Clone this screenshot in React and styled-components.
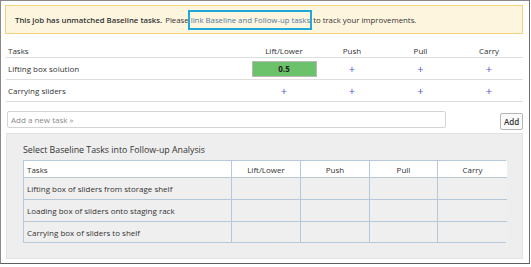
import React from 'react'
import styled, { createGlobalStyle } from 'styled-components'

const GlobalStyle = createGlobalStyle`
  body {
    margin: 0;
    background: #ffffff;
    font-family: "Open Sans", "Liberation Sans", sans-serif;
    color: #333333;
  }
`

const Frame = styled.div`
  box-sizing: border-box;
  width: 530px;
  height: 264px;
  border: 1px solid #8a8a8a;
  border-right-color: #6f6f6f;
  border-bottom-color: #5f5f5f;
  padding: 4px 6px 0 4px;
  display: flex;
  flex-direction: column;
`

const Banner = styled.div`
  box-sizing: border-box;
  height: 29px;
  flex-shrink: 0;
  background: #fdf5de;
  border: 1px solid #f3d27a;
  display: flex;
  align-items: center;
  padding-left: 9px;
  font-size: 7.8px;
  color: #333;
  white-space: nowrap;
`

const Strong = styled.b`
  font-weight: 600;
  margin-right: 3px;
`

const Link = styled.a`
  position: relative;
  color: #4d7aa3;
  text-decoration: none;
  margin-right: 3px;
`

const Highlight = styled.span`
  position: absolute;
  left: -3px;
  right: -2px;
  top: -5px;
  bottom: -5px;
  box-sizing: border-box;
  border: 2px solid #1ea9d9;
  pointer-events: none;
`

const TaskTable = styled.div`
  display: grid;
  grid-template-columns: 1fr 68px 68px 69px 68px;
  margin-left: 1px;
  font-size: 8px;
`

const HeadCell = styled.div`
  height: 24px;
  box-sizing: border-box;
  padding-top: 11px;
  line-height: 11px;
  text-align: ${p => (p.$left ? 'left' : 'center')};
  padding-left: ${p => (p.$left ? '2px' : '0')};
  border-bottom: 1px solid #dedede;
`

const Cell = styled.div`
  height: 22px;
  box-sizing: border-box;
  display: flex;
  align-items: center;
  justify-content: ${p => (p.$left ? 'flex-start' : 'center')};
  padding-left: ${p => (p.$left ? '2px' : '0')};
  border-bottom: 1px solid #dedede;
`

const Score = styled.div`
  width: 65px;
  height: 16px;
  box-sizing: border-box;
  background: #6cc26b;
  border: 1px solid #b9b9b9;
  display: flex;
  align-items: center;
  justify-content: center;
  font-weight: 700;
  color: #222;
`

const Plus = styled.span`
  color: #5252d6;
  font-size: 11px;
  line-height: 1;
`

const AddRow = styled.div`
  display: flex;
  align-items: flex-start;
  justify-content: space-between;
  margin-top: 9px;
  padding-left: 2px;
`

const Input = styled.input`
  box-sizing: border-box;
  width: 439px;
  height: 17px;
  border: 1px solid #d4d4d4;
  border-radius: 2px;
  padding: 0 3px;
  font-family: "Open Sans", "Liberation Sans", sans-serif;
  font-size: 8px;
  color: #333;
  outline: none;
  &::placeholder {
    color: #8a8a8a;
  }
`

const Button = styled.button`
  box-sizing: border-box;
  margin-top: 2px;
  width: 23px;
  height: 17px;
  padding: 0;
  background: #fafafa;
  border: 1px solid #b5b5b5;
  border-radius: 2px;
  font-family: "Open Sans", "Liberation Sans", sans-serif;
  font-size: 8px;
  font-weight: 600;
  color: #333;
`

const Panel = styled.div`
  box-sizing: border-box;
  margin-top: 3px;
  margin-left: 1px;
  height: 126px;
  flex-shrink: 0;
  background: #eeeeee;
  border: 1px solid #e2e2e2;
  padding: 10px 16px 0 16px;
`

const PanelTitle = styled.div`
  font-size: 8.8px;
  line-height: 12px;
  color: #333;
  margin-bottom: 4px;
`

const BaseTable = styled.div`
  display: grid;
  grid-template-columns: 208px 69px 69px 68px 69px;
  grid-auto-rows: min-content;
  border: 1px solid #b7c9d9;
  font-size: 8px;
  line-height: 11px;
`

const BaseHead = styled.div`
  height: 17px;
  box-sizing: border-box;
  background: #ffffff;
  display: flex;
  align-items: center;
  justify-content: ${p => (p.$left ? 'flex-start' : 'center')};
  padding-left: ${p => (p.$left ? '3px' : '0')};
  border-right: ${p => (p.$last ? 'none' : '1px solid #b7c9d9')};
  border-bottom: 1px solid #b7c9d9;
`

const BaseCell = styled.div`
  height: ${p => (p.$bottom ? 20 : 22)}px;
  box-sizing: border-box;
  background: #efefef;
  display: flex;
  align-items: center;
  padding-left: ${p => (p.$left ? '3px' : '0')};
  border-right: ${p => (p.$last ? 'none' : '1px solid #b7c9d9')};
  border-bottom: ${p => (p.$bottom ? 'none' : '1px solid #b7c9d9')};
`

const columns = ['Lift/Lower', 'Push', 'Pull', 'Carry']

const tasks = [
  { name: 'Lifting box solution', values: ['0.5', null, null, null] },
  { name: 'Carrying sliders', values: [null, null, null, null] }
]

const baseline = [
  'Lifting box of sliders from storage shelf',
  'Loading box of sliders onto staging rack',
  'Carrying box of sliders to shelf'
]

export default function App () {
  return (
    <>
      <GlobalStyle />
      <Frame>
        <Banner>
          <Strong>This job has unmatched Baseline tasks.</Strong>
          Please&nbsp;<Link href='#'>link Baseline and Follow-up tasks<Highlight /></Link>to track your improvements.
        </Banner>

        <TaskTable>
          <HeadCell $left>Tasks</HeadCell>
          {columns.map(c => <HeadCell key={c}>{c}</HeadCell>)}
          {tasks.map(t => (
            <React.Fragment key={t.name}>
              <Cell $left>{t.name}</Cell>
              {t.values.map((v, i) => (
                <Cell key={i}>
                  {v ? <Score>{v}</Score> : <Plus>+</Plus>}
                </Cell>
              ))}
            </React.Fragment>
          ))}
        </TaskTable>

        <AddRow>
          <Input placeholder='Add a new task »' />
          <Button>Add</Button>
        </AddRow>

        <Panel>
          <PanelTitle>Select Baseline Tasks into Follow-up Analysis</PanelTitle>
          <BaseTable>
            <BaseHead $left>Tasks</BaseHead>
            {columns.map((c, i) => <BaseHead key={c} $last={i === 3}>{c}</BaseHead>)}
            {baseline.map((b, r) => (
              <React.Fragment key={b}>
                <BaseCell $left $bottom={r === 2}>{b}</BaseCell>
                {columns.map((c, i) => (
                  <BaseCell key={c} $last={i === 3} $bottom={r === 2} />
                ))}
              </React.Fragment>
            ))}
          </BaseTable>
        </Panel>
      </Frame>
    </>
  )
}
